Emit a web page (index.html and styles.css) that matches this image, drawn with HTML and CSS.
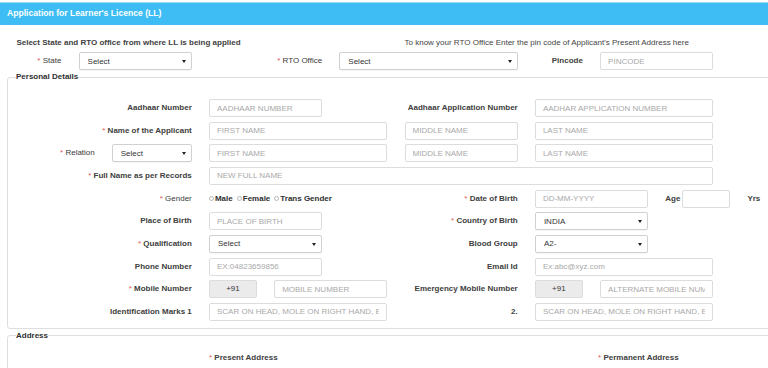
FILE: index.html
```html
<!DOCTYPE html>
<html lang="en">
<head>
<meta charset="utf-8">
<title>Application for Learner's Licence (LL)</title>
<link rel="stylesheet" href="styles.css">
</head>
<body>
<div class="page">
  <div class="hdr">Application for Learner's Licence (LL)</div>

  <div class="top">
    <div class="grid intro">
      <div class="c1 w6 intro-l">Select State and RTO office from where LL is being applied</div>
      <div class="c7 w6 intro-r">To know your RTO Office Enter the pin code of Applicant's Present Address here</div>
    </div>
    <div class="grid toprow">
      <label class="lbl n c1 w1"><i>*</i> State</label>
      <span class="selw c2 w2"><select class="sel"><option>Select</option></select></span>
      <label class="lbl n c4 w2"><i>*</i> RTO Office</label>
      <span class="selw c6 w3"><select class="sel"><option>Select</option></select></span>
      <label class="lbl c9 w1">Pincode</label>
      <input class="inp c10 w2" placeholder="PINCODE">
    </div>
  </div>

  <fieldset class="fs">
    <legend>Personal Details</legend>
    <div class="grid rows">
      <label class="lbl c1 w3">Aadhaar Number</label>
      <input class="inp c4 w2" placeholder="AADHAAR NUMBER">
      <label class="lbl c7 w2">Aadhaar Application Number</label>
      <input class="inp c9 w3" placeholder="AADHAR APPLICATION NUMBER">

      <label class="lbl c1 w3"><i>*</i> Name of the Applicant</label>
      <input class="inp c4 w3" placeholder="FIRST NAME">
      <input class="inp c7 w2" placeholder="MIDDLE NAME">
      <input class="inp c9 w3" placeholder="LAST NAME">

      <div class="rel c1 w3">
        <label class="lbl n"><i>*</i> Relation</label>
        <span class="selw relsel"><select class="sel"><option>Select</option></select></span>
      </div>
      <input class="inp c4 w3" placeholder="FIRST NAME">
      <input class="inp c7 w2" placeholder="MIDDLE NAME">
      <input class="inp c9 w3" placeholder="LAST NAME">

      <label class="lbl c1 w3"><i>*</i> Full Name as per Records</label>
      <input class="inp c4 w8" placeholder="NEW FULL NAME">

      <label class="lbl n c1 w3"><i>*</i> Gender</label>
      <div class="radios c4 w3">
        <span class="rad"></span><b>Male</b>
        <span class="rad"></span><b>Female</b>
        <span class="rad"></span><b>Trans Gender</b>
      </div>
      <label class="lbl c7 w2"><i>*</i> Date of Birth</label>
      <input class="inp c9 w2" placeholder="DD-MM-YYYY">
      <div class="age c11 w2">
        <b>Age</b>
        <input class="inp agein">
        <b class="yrs">Yrs</b>
      </div>

      <label class="lbl c1 w3">Place of Birth</label>
      <input class="inp c4 w2" placeholder="PLACE OF BIRTH">
      <label class="lbl c7 w2"><i>*</i> Country of Birth</label>
      <span class="selw c9 w2"><select class="sel"><option>INDIA</option></select></span>

      <label class="lbl c1 w3"><i>*</i> Qualification</label>
      <span class="selw c4 w2"><select class="sel"><option>Select</option></select></span>
      <label class="lbl c7 w2">Blood Group</label>
      <span class="selw c9 w2"><select class="sel"><option>A2-</option></select></span>

      <label class="lbl c1 w3">Phone Number</label>
      <input class="inp c4 w2" placeholder="EX:04823659856">
      <label class="lbl c7 w2">Email Id</label>
      <input class="inp c9 w3" placeholder="Ex:abc@xyz.com">

      <label class="lbl c1 w3"><i>*</i> Mobile Number</label>
      <div class="code c4 w1">+91</div>
      <input class="inp c5 w2" placeholder="MOBILE NUMBER">
      <label class="lbl c7 w2">Emergency Mobile Number</label>
      <div class="code c9 w1">+91</div>
      <input class="inp c10 w2" placeholder="ALTERNATE MOBILE NUMBER">

      <label class="lbl c1 w3">Identification Marks 1</label>
      <input class="inp c4 w3" placeholder="SCAR ON HEAD, MOLE ON RIGHT HAND, ETC">
      <label class="lbl c7 w2">2.</label>
      <input class="inp c9 w3" placeholder="SCAR ON HEAD, MOLE ON RIGHT HAND, ETC">
    </div>
  </fieldset>

  <fieldset class="fs addr">
    <legend>Address</legend>
    <div class="grid arow">
      <div class="atitle c4 w4"><i>*</i> Present Address</div>
      <div class="atitle c10 w3"><i>*</i> Permanent Address</div>
    </div>
  </fieldset>
</div>
</body>
</html>
```

FILE: styles.css
```css
html, body {
  margin: 0;
  padding: 0;
  overflow: hidden;
  background: #ffffff;
}

body {
  font-family: "Liberation Sans", Arial, sans-serif;
  font-size: 8px;
  color: #333333;
}

.page {
  width: 800px;
}

.hdr {
  margin-top: 2px;
  border-top: 1px solid #9adcf8;
  height: 22px;
  line-height: 21px;
  background: #3dbdf4;
  color: #ffffff;
  font-weight: bold;
  font-size: 8.6px;
  padding-left: 7px;
}

.top {
  padding-left: 13.4px;
}

.grid {
  display: grid;
  grid-template-columns: repeat(12, 48px);
  column-gap: 17.2px;
}

.c1 { grid-column-start: 1; }
.c2 { grid-column-start: 2; }
.c4 { grid-column-start: 4; }
.c5 { grid-column-start: 5; }
.c6 { grid-column-start: 6; }
.c7 { grid-column-start: 7; }
.c9 { grid-column-start: 9; }
.c10 { grid-column-start: 10; }
.c11 { grid-column-start: 11; }

.w1 { grid-column-end: span 1; }
.w2 { grid-column-end: span 2; }
.w3 { grid-column-end: span 3; }
.w4 { grid-column-end: span 4; }
.w6 { grid-column-end: span 6; }
.w8 { grid-column-end: span 8; }

.intro {
  margin-top: 12px;
  line-height: 12px;
}

.intro-l {
  padding-left: 3px;
  font-weight: bold;
  color: #404040;
}

.intro-r {
  color: #444444;
}

.toprow {
  margin-top: 3px;
  grid-auto-rows: 18px;
}

.lbl {
  display: block;
  text-align: right;
  line-height: 18px;
  font-weight: bold;
  color: #404040;
  white-space: nowrap;
}

.lbl.n {
  font-weight: normal;
  color: #3a3a3a;
}

i {
  font-style: normal;
  color: #e25555;
  font-weight: normal;
}

.inp,
.sel,
.code {
  box-sizing: border-box;
  height: 18px;
  width: 100%;
  margin: 0;
  border: 1px solid #dcdcdc;
  border-radius: 2px;
  font-family: "Liberation Sans", Arial, sans-serif;
  font-size: 8px;
  color: #333333;
  background: #ffffff;
  outline: none;
}

.inp {
  padding: 0 7px;
}

.inp::placeholder {
  color: #a9a9a9;
  opacity: 1;
}

.selw {
  position: relative;
  display: block;
}

.sel {
  appearance: none;
  -webkit-appearance: none;
  padding: 0 0 0 8px;
  border-color: #d0d0d0;
  box-shadow: 0 1px 1px rgba(0, 0, 0, 0.04);
}

.selw::after {
  content: "";
  position: absolute;
  right: 6px;
  top: 8px;
  border-left: 2px solid transparent;
  border-right: 2px solid transparent;
  border-top: 3px solid #222222;
}

.code {
  background: #ebebeb;
  text-align: center;
  line-height: 16px;
}

.fs {
  margin: 1px 0 0 7px;
  padding: 0;
  border: 1px solid #dedede;
  border-radius: 3px;
  min-width: 0;
}

.fs legend {
  margin-left: 8px;
  padding: 0;
  font-weight: bold;
  font-size: 8px;
  line-height: 12px;
  color: #2f2f2f;
}

.rows {
  padding: 16px 0 7px 5.4px;
  grid-auto-rows: 18px;
  row-gap: 4.67px;
}

.rel {
  display: flex;
  justify-content: flex-end;
  gap: 17px;
}

.relsel {
  width: 80px;
}

.radios {
  display: flex;
  align-items: center;
  font-weight: bold;
  color: #2f2f2f;
  white-space: nowrap;
}

.rad {
  box-sizing: border-box;
  width: 5px;
  height: 5px;
  border: 1px solid #b8b8b8;
  border-radius: 50%;
  margin-right: 1px;
}

.radios b + .rad {
  margin-left: 4px;
}

.age {
  display: flex;
  align-items: center;
  white-space: nowrap;
}

.age b {
  color: #404040;
}

.agein {
  width: 48px;
  margin-left: 2px;
}

.yrs {
  margin-left: 17px;
}

.arow {
  padding: 10px 0 20px 5.4px;
  line-height: 12px;
}

.atitle {
  font-weight: bold;
  color: #404040;
  white-space: nowrap;
}

.atitle + .atitle {
  margin-left: -2px;
}
```
